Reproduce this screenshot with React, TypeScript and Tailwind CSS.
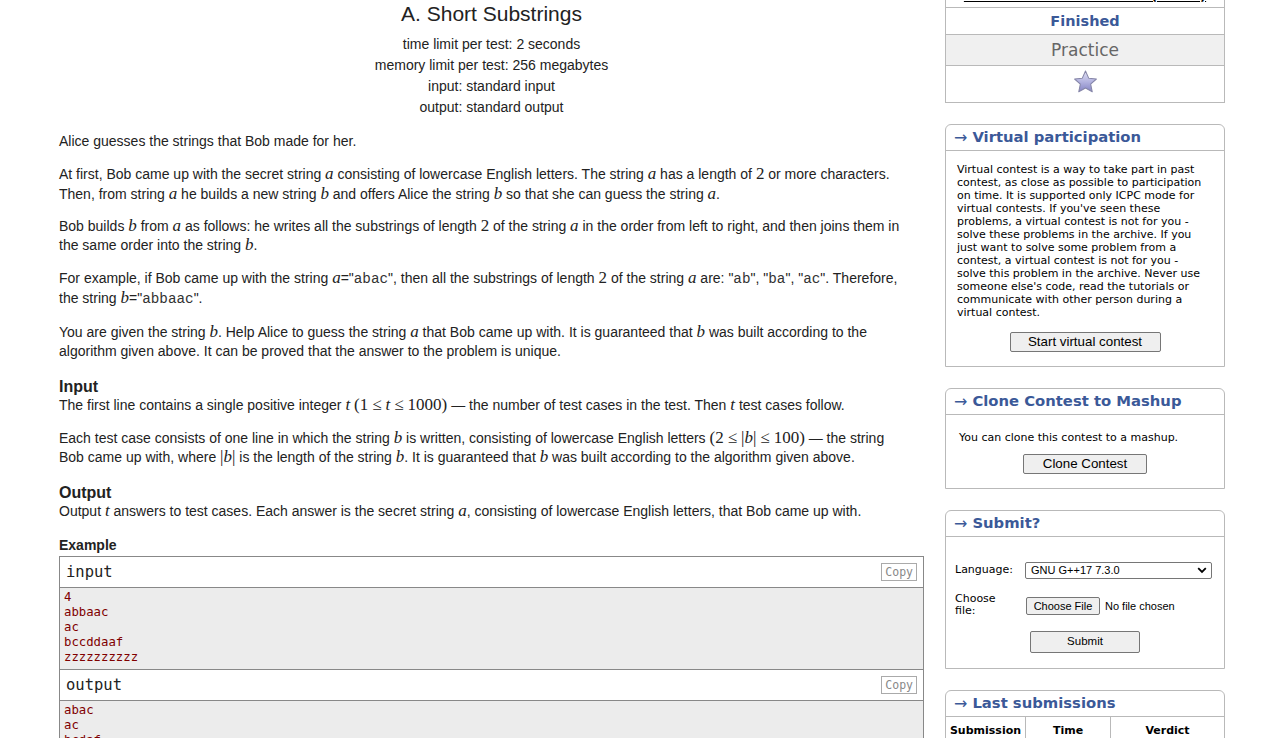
import React from "react";

type P = { children: React.ReactNode };

const V = ({ children }: P) => (
  <span className="font-['Liberation_Serif',serif] italic text-[17px] leading-none">{children}</span>
);
const N = ({ children }: P) => (
  <span className="font-['Liberation_Serif',serif] text-[17px] leading-none">{children}</span>
);
const C = ({ children }: P) => (
  <span className="font-['Liberation_Mono',monospace] text-[14.3px] text-[#333] leading-none">{children}</span>
);
const Le = () => <span className="mx-[4px]">≤</span>;

const Star = () => (
  <svg width="25" height="25" viewBox="0 0 24 24">
    <defs>
      <linearGradient id="sg" x1="0" y1="0" x2="0" y2="1">
        <stop offset="0" stopColor="#e2e2f4" />
        <stop offset="0.5" stopColor="#b4b4e0" />
        <stop offset="1" stopColor="#8484c4" />
      </linearGradient>
    </defs>
    <polygon
      points="12,2 15.06,8.79 22.46,9.6 16.95,14.61 18.47,21.9 12,18.2 5.53,21.9 7.05,14.61 1.54,9.6 8.94,8.79"
      fill="url(#sg)"
      stroke="#8686a8"
      strokeWidth="1"
      strokeLinejoin="round"
    />
  </svg>
);

const BoxHeader = ({ children }: P) => (
  <div className="h-[26px] border-b border-[#b9b9b9] pl-[8px] flex items-center text-[#3b5998]">
    <span className="text-[16px] mr-[5px] leading-none">→</span>
    <span className="font-bold text-[14.8px] leading-none">{children}</span>
  </div>
);

const Sample = ({ title, lines }: { title: string; lines: string[] }) => (
  <>
    <div className="h-[30px] flex items-center justify-between pl-[6px] pr-[6px] bg-white">
      <span className="font-['DejaVu_Sans_Mono',monospace] text-[15.5px] text-[#222] translate-y-[1px]">{title}</span>
      <span className="border border-[#aaa] text-[#888] font-['DejaVu_Sans_Mono',monospace] text-[11.5px] leading-[16px] px-[3px]">
        Copy
      </span>
    </div>
    <div className="border-t border-b border-[#888] bg-[#ececec] pt-[2px] pb-[4px] pl-[4px] font-['DejaVu_Sans_Mono',monospace] text-[12.3px] leading-[15px] text-[#800000]">
      {lines.map((l, i) => (
        <div key={i}>{l}</div>
      ))}
    </div>
  </>
);

export default function App() {
  return (
    <div className="w-[1277px] h-[738px] overflow-hidden bg-white flex">
      {/* main column */}
      <div className="w-[865px] ml-[59px] shrink-0 pt-[2px] flex flex-col font-['Liberation_Sans',Arial,sans-serif] text-[#222] text-[14px]">
        <div className="text-center text-[21px] leading-[24px]">A. Short Substrings</div>
        <div className="mt-[8px] text-center leading-[21px]">
          <div>time limit per test: 2 seconds</div>
          <div>memory limit per test: 256 megabytes</div>
          <div>input: standard input</div>
          <div>output: standard output</div>
        </div>
        <div className="mt-[14px] leading-[19.5px]">Alice guesses the strings that Bob made for her.</div>
        <div className="mt-[13.5px] leading-[19.5px]">
          At first, Bob came up with the secret string <V>a</V> consisting of lowercase English letters. The string{" "}
          <V>a</V> has a length of <N>2</N> or more characters.
          <br />
          Then, from string <V>a</V> he builds a new string <V>b</V> and offers Alice the string <V>b</V> so that she
          can guess the string <V>a</V>.
        </div>
        <div className="mt-[12.5px] leading-[19.5px]">
          Bob builds <V>b</V> from <V>a</V> as follows: he writes all the substrings of length <N>2</N> of the string{" "}
          <V>a</V> in the order from left to right, and then joins them in
          <br />
          the same order into the string <V>b</V>.
        </div>
        <div className="mt-[13.5px] leading-[19.5px]">
          For example, if Bob came up with the string <V>a</V>="<C>abac</C>", then all the substrings of length{" "}
          <N>2</N> of the string <V>a</V> are: "<C>ab</C>", "<C>ba</C>", "<C>ac</C>". Therefore,
          <br />
          the string <V>b</V>="<C>abbaac</C>".
        </div>
        <div className="mt-[14.5px] leading-[19.5px]">
          You are given the string <V>b</V>. Help Alice to guess the string <V>a</V> that Bob came up with. It is
          guaranteed that <V>b</V> was built according to the
          <br />
          algorithm given above. It can be proved that the answer to the problem is unique.
        </div>
        <div className="mt-[15px] text-[16px] font-bold leading-[19px]">Input</div>
        <div className="leading-[19.5px]">
          The first line contains a single positive integer <V>t</V>{" "}
          <N>
            (1<Le />
            <i>t</i>
            <Le />
            1000)
          </N>{" "}
          — the number of test cases in the test. Then <V>t</V> test cases follow.
        </div>
        <div className="mt-[13.5px] leading-[19.5px]">
          Each test case consists of one line in which the string <V>b</V> is written, consisting of lowercase English
          letters{" "}
          <N>
            (2<Le />|<i>b</i>|<Le />
            100)
          </N>{" "}
          — the string
          <br />
          Bob came up with, where{" "}
          <N>
            |<i>b</i>|
          </N>{" "}
          is the length of the string <V>b</V>. It is guaranteed that <V>b</V> was built according to the algorithm
          given above.
        </div>
        <div className="mt-[15.5px] text-[16px] font-bold leading-[19px]">Output</div>
        <div className="leading-[19.5px]">
          Output <V>t</V> answers to test cases. Each answer is the secret string <V>a</V>, consisting of lowercase
          English letters, that Bob came up with.
        </div>
        <div className="mt-[14px] font-bold leading-[19px]">Example</div>
        <div className="mt-[1.5px] border border-[#888] border-b-0">
          <Sample title="input" lines={["4", "abbaac", "ac", "bccddaaf", "zzzzzzzzzz"]} />
          <Sample title="output" lines={["abac", "ac", "bcdaf", "z"]} />
        </div>
      </div>

      {/* sidebar */}
      <div className="w-[280px] ml-[21px] mt-[-24px] shrink-0 flex flex-col font-['DejaVu_Sans',Verdana,sans-serif] text-black">
        <div className="border border-[#b9b9b9]">
          <div className="h-[30px] pt-[10px] text-center leading-[16px] text-[13.5px] font-bold">
            <span className="underline">Codeforces Round #650 (Div. 3)</span>
          </div>
          <div className="border-t border-[#b9b9b9] h-[27px] leading-[26px] text-center text-[14.5px] font-bold text-[#3b5998]">
            Finished
          </div>
          <div className="border-t border-[#b9b9b9] h-[31px] leading-[31px] bg-[#f0f0f0] text-center text-[17px] text-[#666]">
            Practice
          </div>
          <div className="border-t border-[#b9b9b9] h-[37px] pb-[5px] flex items-center justify-center">
            <Star />
          </div>
        </div>

        <div className="mt-[21px] border border-[#b9b9b9] rounded-t-[6px]">
          <BoxHeader>Virtual participation</BoxHeader>
          <div className="pt-[11.5px] pl-[11px] pr-[6px] text-[11px] leading-[13px]">
            Virtual contest is a way to take part in past
            <br />
            contest, as close as possible to participation
            <br />
            on time. It is supported only ICPC mode for
            <br />
            virtual contests. If you've seen these
            <br />
            problems, a virtual contest is not for you -
            <br />
            solve these problems in the archive. If you
            <br />
            just want to solve some problem from a
            <br />
            contest, a virtual contest is not for you -
            <br />
            solve this problem in the archive. Never use
            <br />
            someone else's code, read the tutorials or
            <br />
            communicate with other person during a
            <br />
            virtual contest.
          </div>
          <div className="mt-[13.5px] pb-[14px] flex justify-center">
            <div className="w-[151px] h-[20px] flex items-center justify-center bg-[#efefef] border border-[#767676] rounded-[2px] font-['Liberation_Sans',Arial,sans-serif] text-[13.33px]">
              Start virtual contest
            </div>
          </div>
        </div>

        <div className="mt-[21px] border border-[#b9b9b9] rounded-t-[6px]">
          <BoxHeader>Clone Contest to Mashup</BoxHeader>
          <div className="pt-[15.5px] pl-[13px] text-[11px] leading-[13px]">You can clone this contest to a mashup.</div>
          <div className="mt-[10.5px] pb-[14px] flex justify-center">
            <div className="w-[124px] h-[20px] flex items-center justify-center bg-[#efefef] border border-[#767676] rounded-[2px] font-['Liberation_Sans',Arial,sans-serif] text-[13.33px]">
              Clone Contest
            </div>
          </div>
        </div>

        <div className="mt-[21px] border border-[#b9b9b9] rounded-t-[6px]">
          <BoxHeader>Submit?</BoxHeader>
          <div className="pt-[25px] pl-[9px] pb-[15px] text-[11px]">
            <div className="flex items-center h-[17px]">
              <div className="w-[70px]">Language:</div>
              <div className="w-[187px] h-[17px] border border-[#767676] rounded-[2px] bg-white flex items-center justify-between pl-[5px] pr-[4px] font-['Liberation_Sans',Arial,sans-serif] text-[11px]">
                <span>GNU G++17 7.3.0</span>
                <svg width="10" height="7" viewBox="0 0 10 7">
                  <path d="M1.2 1.2 L5 5 L8.8 1.2" fill="none" stroke="#000" strokeWidth="1.8" />
                </svg>
              </div>
            </div>
            <div className="mt-[14px] flex items-start">
              <div className="w-[71px] leading-[12px]">
                Choose
                <br />
                file:
              </div>
              <div className="mt-[4px] flex items-center font-['Liberation_Sans',Arial,sans-serif] text-[11px]">
                <div className="w-[74px] h-[18px] flex items-center justify-center bg-[#efefef] border border-[#767676] rounded-[2px]">
                  Choose File
                </div>
                <span className="ml-[5px]">No file chosen</span>
              </div>
            </div>
            <div className="mt-[14px] flex justify-center pr-[9px]">
              <div className="w-[110px] h-[22px] flex items-center justify-center bg-[#efefef] border border-[#767676] rounded-[2px] font-['Liberation_Sans',Arial,sans-serif] text-[11.5px]">
                Submit
              </div>
            </div>
          </div>
        </div>

        <div className="mt-[21px] border border-[#b9b9b9] rounded-t-[6px]">
          <BoxHeader>Last submissions</BoxHeader>
          <div className="flex h-[28px] text-[11px] font-bold">
            <div className="w-[80px] flex items-center justify-center border-r border-[#b9b9b9]">Submission</div>
            <div className="w-[85px] flex items-center justify-center border-r border-[#b9b9b9]">Time</div>
            <div className="flex-1 flex items-center justify-center">Verdict</div>
          </div>
        </div>
      </div>
    </div>
  );
}
